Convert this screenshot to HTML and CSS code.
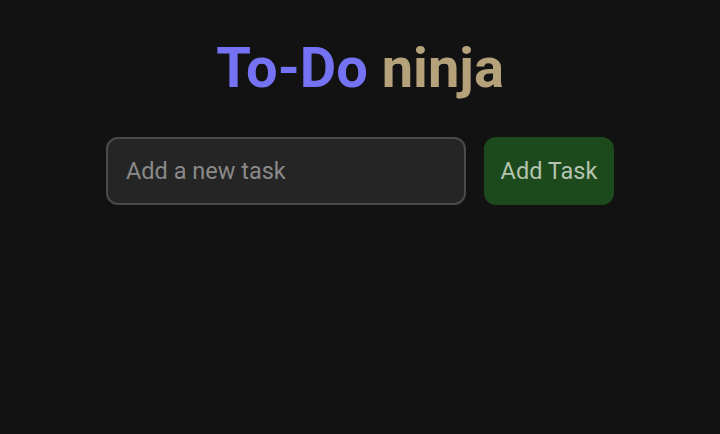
FILE: index.html
```html
<!DOCTYPE html>
<html>
<head>
<meta charset="utf-8">
<link rel="stylesheet" href="styles.css">
</head>
<body>
<main class="app">
  <h1 class="title"><span class="title-a">To-Do</span> <span class="title-b">ninja</span></h1>
  <form class="add-form">
    <input class="task-input" type="text" placeholder="Add a new task">
    <button class="add-btn" type="button">Add Task</button>
  </form>
</main>
</body>
</html>
```
FILE: styles.css
```css
html, body {
  margin: 0;
  padding: 0;
  background: #121212;
  font-family: Roboto, "Noto Sans", sans-serif;
}
.app {
  display: flex;
  flex-direction: column;
  align-items: center;
  padding-top: 36px;
}
.title {
  margin: 0;
  font-size: 56px;
  font-weight: 700;
  line-height: 64px;
}
.title-a { color: #7573f4; }
.title-b { color: #b5a27a; }
.add-form {
  display: flex;
  gap: 18px;
  margin-top: 37px;
}
.task-input {
  box-sizing: border-box;
  width: 360px;
  height: 68px;
  padding: 0 18px;
  border: 2px solid #4a4a4a;
  border-radius: 12px;
  background: #252525;
  color: #ddd;
  font-family: Roboto, sans-serif;
  font-size: 23.5px;
  outline: none;
}
.task-input::placeholder { color: #8a8a8a; }
.add-btn {
  box-sizing: border-box;
  width: 130px;
  height: 68px;
  border: none;
  border-radius: 12px;
  background: #1c4a1c;
  color: #b4c4b0;
  font-family: Roboto, sans-serif;
  font-size: 23.5px;
}
```
